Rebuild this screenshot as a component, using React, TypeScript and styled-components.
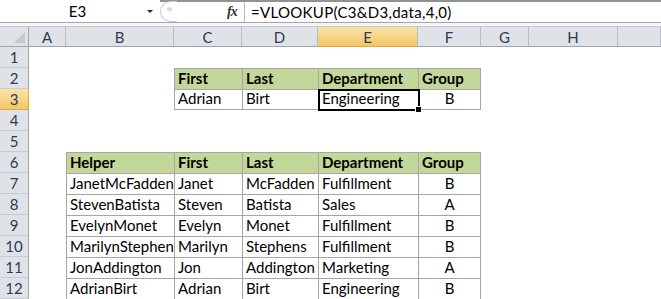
import React from 'react';
import styled, { createGlobalStyle, css } from 'styled-components';

const GlobalStyle = createGlobalStyle`
  html, body {
    margin: 0;
    padding: 0;
    background: #ffffff;
    overflow: hidden;
  }
  body {
    font-family: Lato, "Liberation Sans", sans-serif;
  }
`;

// column letters; the last one is the partly visible column past H
const COLS = ['A', 'B', 'C', 'D', 'E', 'F', 'G', 'H', ''];
// row header width, then A..H; the tail column takes what is left
const WIDTHS = [29, 37, 108, 68, 76, 100, 63, 48, 89];
const ROWS = [1, 2, 3, 4, 5, 6, 7, 8, 9, 10, 11, 12];

type CellKind = 'head' | 'body';
type CellData = { text: string; kind: CellKind; center?: boolean };

// two small tables: the lookup at C2:F3 and the data at B6:F12
const cells: Record<string, CellData> = {};
const putRow = (row: number, startCol: string, values: string[], kind: CellKind) => {
  const start = COLS.indexOf(startCol);
  values.forEach((v, i) => {
    const col = COLS[start + i];
    cells[col + row] = { text: v, kind, center: col === 'F' && kind === 'body' };
  });
};
putRow(2, 'C', ['First', 'Last', 'Department', 'Group'], 'head');
putRow(3, 'C', ['Adrian', 'Birt', 'Engineering', 'B'], 'body');
putRow(6, 'B', ['Helper', 'First', 'Last', 'Department', 'Group'], 'head');
const people = [
  ['JanetMcFadden', 'Janet', 'McFadden', 'Fulfillment', 'B'],
  ['StevenBatista', 'Steven', 'Batista', 'Sales', 'A'],
  ['EvelynMonet', 'Evelyn', 'Monet', 'Fulfillment', 'B'],
  ['MarilynStephens', 'Marilyn', 'Stephens', 'Fulfillment', 'B'],
  ['JonAddington', 'Jon', 'Addington', 'Marketing', 'A'],
  ['AdrianBirt', 'Adrian', 'Birt', 'Engineering', 'B'],
];
people.forEach((p, i) => putRow(7 + i, 'B', p, 'body'));

const isLastCol = (col: string) => col === 'F';
const isLastRow = (row: number) => row === 3 || row === 13;

const Page = styled.div`
  width: 661px;
  height: 299px;
  overflow: hidden;
  display: flex;
  flex-direction: column;
`;

const FormulaBar = styled.div`
  display: flex;
  height: 23px;
  border-bottom: 1px solid #a3a7ac;
  background: #ffffff;
`;

const NameBox = styled.div`
  width: 160px;
  display: flex;
  align-items: center;
  font-size: 15px;
  color: #000;
  span {
    flex: 1;
    text-align: center;
    padding-left: 8px;
  }
`;

const DropArrow = styled.div`
  width: 0;
  height: 0;
  margin-right: 7px;
  border-left: 3px solid transparent;
  border-right: 3px solid transparent;
  border-top: 3px solid #222;
`;

const Editor = styled.div`
  flex: 1;
  display: flex;
  align-items: center;
  border-top: 2px solid #8f9398;
`;

const Grabber = styled.div`
  width: 16px;
  height: 19px;
  margin-top: -1px;
  border: 1px solid #c9ccd0;
  border-right: none;
  border-radius: 11px 0 0 11px;
  display: flex;
  align-items: center;
  justify-content: center;
  &::after {
    content: '';
    width: 5px;
    height: 4px;
    margin-bottom: 5px;
    border-radius: 3px 3px 1px 1px;
    background: #d9dce0;
  }
`;

const Fx = styled.div`
  margin-left: 50px;
  width: 17px;
  font-family: "Liberation Serif", serif;
  font-style: italic;
  font-weight: bold;
  font-size: 14px;
  color: #333;
  letter-spacing: -1px;
  height: 100%;
  display: flex;
  align-items: center;
  border-right: 1px solid #b5b8bc;
`;

const FormulaText = styled.div`
  padding-left: 6px;
  font-size: 15px;
  letter-spacing: 0.3px;
  color: #000;
`;

const Strip = styled.div`
  height: 3px;
  background: #f6f6f6;
  border-bottom: 1px solid #c3c8ce;
`;

const Grid = styled.div`
  display: grid;
  grid-template-columns: ${WIDTHS.map((w) => w + 'px').join(' ')} 1fr;
  grid-template-rows: 20px;
  grid-auto-rows: 21px;
`;

const HeaderCell = styled.div<{ $active?: boolean; $corner?: boolean }>`
  background: #dfe3e8;
  border-right: 1px solid #b9bdc3;
  border-bottom: 1px solid #9fa4aa;
  display: flex;
  align-items: center;
  justify-content: center;
  font-size: 15px;
  color: #2a3c56;
  position: relative;
  ${(p) =>
    p.$active &&
    css`
      background: linear-gradient(#fbe3a8, #f3c766);
      border-bottom: 1px solid #e9a93a;
    `}
  ${(p) =>
    p.$corner &&
    css`
      border-right: 1px solid #9fa4aa;
      &::after {
        content: '';
        position: absolute;
        right: 3px;
        bottom: 3px;
        border-left: 11px solid transparent;
        border-bottom: 11px solid #c5c9ce;
      }
    `}
`;

const RowHeader = styled.div<{ $active?: boolean }>`
  background: #dfe3e8;
  border-right: 1px solid #9fa4aa;
  border-bottom: 1px solid #c7cbd0;
  display: flex;
  align-items: center;
  justify-content: center;
  font-size: 15px;
  color: #2a3c56;
  ${(p) =>
    p.$active &&
    css`
      background: linear-gradient(#fbe3a8, #f3c766);
      border-right: 1px solid #e9a93a;
      border-bottom: 1px solid #e9a93a;
    `}
`;

const Cell = styled.div<{
  $kind?: CellKind;
  $center?: boolean;
  $right?: boolean;
  $bottom?: boolean;
  $selected?: boolean;
}>`
  position: relative;
  display: flex;
  align-items: flex-end;
  padding: 0 3px 2px;
  white-space: nowrap;
  overflow: hidden;
  font-size: 15px;
  color: #000;
  line-height: 18px;
  ${(p) =>
    p.$kind &&
    css`
      border-left: 1px solid #a6a6a6;
      border-top: 1px solid #a6a6a6;
    `}
  ${(p) => p.$kind === 'head' && css`
    background: #c4d79b;
    font-weight: bold;
  `}
  ${(p) => p.$center && css`justify-content: center;`}
  ${(p) => p.$right && css`border-right: 1px solid #a6a6a6;`}
  ${(p) => p.$bottom && css`border-bottom: 1px solid #a6a6a6;`}
  ${(p) =>
    p.$selected &&
    css`
      overflow: visible;
      z-index: 2;
      &::after {
        content: '';
        position: absolute;
        left: -1px;
        top: -1px;
        right: -2px;
        bottom: -2px;
        border: 2px solid #000;
      }
      &::before {
        content: '';
        position: absolute;
        right: -4px;
        bottom: -4px;
        width: 5px;
        height: 5px;
        background: #000;
        border: 1px solid #fff;
        z-index: 3;
      }
    `}
`;

const App = () => {
  return (
    <>
      <GlobalStyle />
      <Page>
        <FormulaBar>
          <NameBox>
            <span>E3</span>
            <DropArrow />
          </NameBox>
          <Editor>
            <Grabber />
            <Fx>fx</Fx>
            <FormulaText>=VLOOKUP(C3&amp;D3,data,4,0)</FormulaText>
          </Editor>
        </FormulaBar>
        <Strip />
        <Grid>
          <HeaderCell $corner />
          {COLS.map((c, i) => (
            <HeaderCell key={'h' + i} $active={c === 'E'}>
              {c}
            </HeaderCell>
          ))}
          {ROWS.map((r) => (
            <React.Fragment key={r}>
              <RowHeader $active={r === 3}>{r}</RowHeader>
              {COLS.map((c, i) => {
                const d = cells[c + r];
                return (
                  <Cell
                    key={c + r + i}
                    $kind={d?.kind}
                    $center={d?.center}
                    $right={!!d && isLastCol(c)}
                    $bottom={!!d && isLastRow(r)}
                    $selected={c === 'E' && r === 3}
                  >
                    {d?.text}
                  </Cell>
                );
              })}
            </React.Fragment>
          ))}
        </Grid>
      </Page>
    </>
  );
};

export default App;
